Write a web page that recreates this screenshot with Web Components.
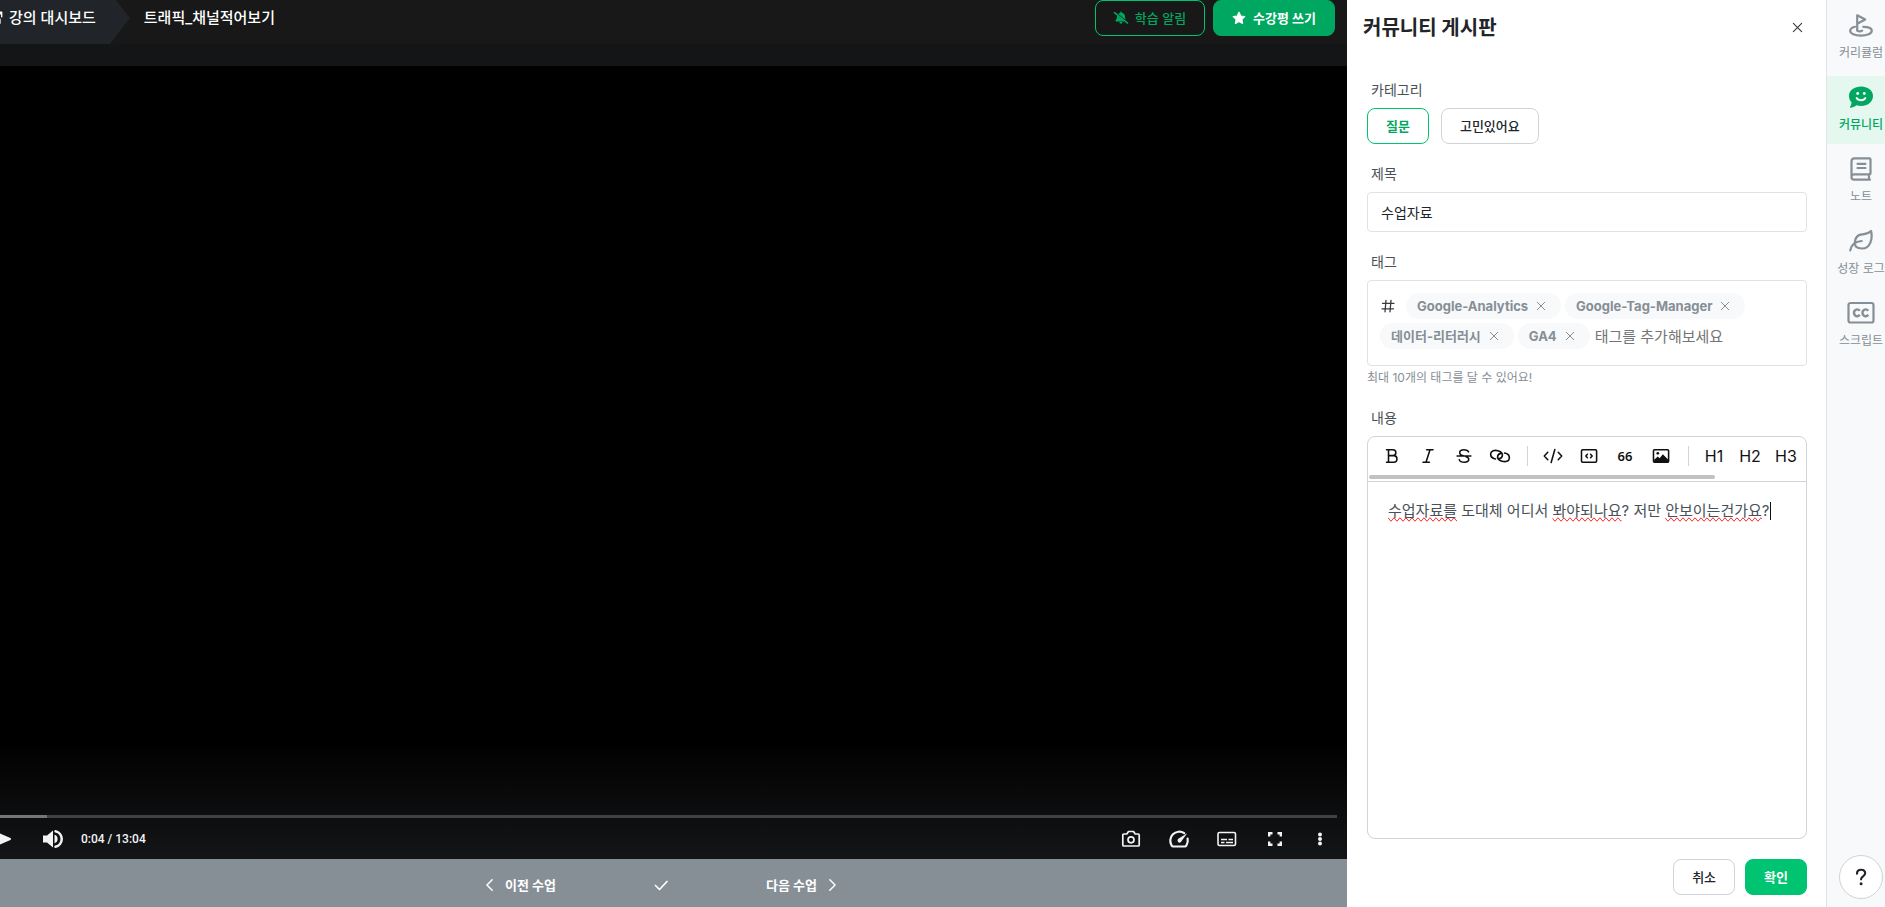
<!DOCTYPE html>
<html lang="ko">
<head>
<meta charset="utf-8">
<meta name="viewport" content="width=device-width, initial-scale=1">
<title>트래픽_채널적어보기</title>
<style>
  body {
    margin: 0;
    overflow: hidden;
    font-family: Inter, "Noto Sans CJK KR", sans-serif;
    color: #212529;
    background: #fff;
  }
</style>
</head>
<body>
<lecture-app></lecture-app>

<script>
const define = (name, html, setup) => {
  const template = document.createElement('template');
  template.innerHTML = html;
  customElements.define(name, class extends HTMLElement {
    constructor() {
      super();
      this.attachShadow({ mode: 'open' }).append(template.content.cloneNode(true));
    }
    connectedCallback() {
      if (setup) setup(this, this.shadowRoot);
    }
  });
};

const stroke = 'fill="none" stroke="currentColor" stroke-linecap="round" stroke-linejoin="round"';
const icons = {
  exit: `<path ${stroke} stroke-width="1.6" d="M6 3H2v11h10.500V9.500M9.500 1.500h5v5M14.500 1.500 8 8"/>`,
  bellOff: `<path fill="currentColor" d="M4.600 3.400C5.600 2.500 6.400 2.200 7.200 2V1.500a.8.8 0 0 1 1.600 0V2c2.200.4 3.800 2.100 3.800 4.200 0 2.200.5 3.300 1.400 4.400L5 3.400zM3.500 5.200l8.500 6.700H2.500c-.8 0-1.200-.9-.6-1.500 1-1.100 1.600-2.200 1.600-5.200zM6.200 12.700h3.600a1.800 1.800 0 0 1-3.600 0z"/><path stroke="currentColor" stroke-width="1.700" stroke-linecap="round" d="m.5 1.800 15 12"/>`,
  star: `<path fill="currentColor" stroke="currentColor" stroke-linejoin="round" stroke-width="1.400" d="m8 1.500 2 4.200 4.600.6-3.300 3.200.8 4.600L8 11.900l-4.100 2.200.8-4.600L1.400 6.300 6 5.700z"/>`,
  close: `<path ${stroke} stroke-width="1.600" d="m2 2 12 12M14 2 2 14"/>`,
  hash: `<path ${stroke} stroke-width="1.300" d="M2.500 5.300h11.500M2 10.800h11.500M6 2.300 5 13.800M11 2.300l-1 11.500"/>`,
  left: `<path ${stroke} stroke-width="1.700" d="M10.500 2 4.500 8l6 6"/>`,
  right: `<path ${stroke} stroke-width="1.700" d="m5.500 2 6 6-6 6"/>`,
  check: `<path ${stroke} stroke-width="1.700" d="m2.500 8.500 4 4 7.500-8"/>`,
  play: `<path fill="currentColor" stroke="currentColor" stroke-width="2" stroke-linejoin="round" d="M6 5v14l16-7z"/>`,
  volume: `<path fill="currentColor" d="M2 8.500h4L12 3.500v17L6 15.500H2zM13.500 7.800a4.400 4.400 0 0 1 0 8.400z"/><path ${stroke} stroke-width="2.500" d="M14.500 4.200a8 8 0 0 1 0 15.600"/>`,
  camera: `<path ${stroke} stroke-width="1.700" d="M4.800 7h3l1.700-2.500h5L16.200 7h3c.6 0 1 .4 1 1v10c0 .6-.4 1-1 1H4.800c-.6 0-1-.4-1-1V8c0-.6.4-1 1-1z"/><circle cx="12" cy="12.800" r="3" ${stroke} stroke-width="1.700"/>`,
  gauge: `<path ${stroke} stroke-width="2.200" d="M17.200 6.200A9 9 0 0 0 4.700 18.600c.3.500.8.900 1.400.9h11.800c.6 0 1.100-.4 1.400-.9a9 9 0 0 0 1.300-7"/><path fill="currentColor" d="m20.200 6.200-8.500 5.200c-2.600 1.800-.1 5.800 2.200 3.600z"/>`,
  subtitle: `<rect x="3" y="5.500" width="17.500" height="13" rx="1.500" ${stroke} stroke-width="1.600"/><path stroke="currentColor" stroke-width="1.600" d="M6 12.500h6M13.500 12.500H18M6 15.500h3.500M11 15.500h7"/>`,
  full: `<path fill="none" stroke="currentColor" stroke-width="2.400" d="M6.200 9.500V6.200h3.300M14.500 6.200h3.300v3.300M17.800 14.500v3.300h-3.300M9.500 17.800H6.200v-3.300"/>`,
  dots: `<g fill="currentColor"><circle cx="12" cy="7.500" r="2"/><circle cx="12" cy="12" r="2"/><circle cx="12" cy="16.500" r="2"/></g>`,
  bold: `<path ${stroke} stroke-width="1.700" d="M6 5.200h7a3.200 3.200 0 0 1 0 6.400H8M13 11.600h.8a3.600 3.600 0 0 1 0 7.200H6M8.200 5.200v13.600"/>`,
  italic: `<path ${stroke} stroke-width="1.700" d="M10.500 5.200h7M6.500 18.800h7M14.200 5.200l-4.400 13.600"/>`,
  strike: `<path ${stroke} stroke-width="1.700" d="M4.500 12h15M17 7.500C16.300 6 14.500 5.200 12 5.200c-3 0-4.700 1.500-4.700 3.200 0 1.500 1 2.600 4.700 3.600M14 12.500c2.300.8 3.200 1.700 3.200 3.100 0 1.900-1.800 3.200-4.900 3.200-2.900 0-4.800-1-5.500-2.800"/>`,
  link: `<path ${stroke} stroke-width="1.800" d="M7 15.200C3.600 14.500 1.600 12.200 1.800 9.600 2.100 6.300 6 5.200 9.800 6.300c3.400 1 5.300 3.300 4.700 5.700-.4 1.700-1.800 2.700-3.600 2.900M17 8.800c3.400.7 5.400 3 5.200 5.600-.3 3.300-4.200 4.400-8 3.300-3.400-1-5.300-3.300-4.700-5.700.4-1.700 1.800-2.700 3.600-2.900"/>`,
  code: `<path ${stroke} stroke-width="1.700" d="M6.300 8 2.500 12l3.800 4M17.700 8l3.800 4-3.800 4M14 5l-4 14"/>`,
  codeBlock: `<rect x="3.800" y="5.200" width="16.500" height="13.600" rx="1.300" ${stroke} stroke-width="1.700"/><path ${stroke} stroke-width="1.600" d="M10.300 10 8.500 12l1.800 2M13.700 10l1.800 2-1.800 2"/>`,
  image: `<rect x="3.800" y="5.200" width="16.500" height="13.600" rx="1" ${stroke} stroke-width="1.700"/><circle cx="8.500" cy="9" r="1.500" fill="currentColor"/><path fill="currentColor" d="m4.500 16 4-3.500 2 2 3.500-4.500 6 6v3h-15.500z"/>`,
  flag: `<path ${stroke} stroke-width="2.200" d="M8.200 17.500V2.300l8 4.200-8 4.200"/><path ${stroke} stroke-width="2.200" d="M6 13.800C3 14.500 1.200 16 1.200 18c0 2.500 4.600 4.600 10.600 4.600 6.200 0 11-1.800 11-4.800 0-2.600-3.800-4-8.500-4"/><path ${stroke} stroke-width="2.200" d="M8.200 17.500c1.300 1 3.700 1 5 .1"/>`,
  chat: `<path fill="currentColor" d="M12.200 1.500C18 1.500 24 5 24 11s-5.500 10-12 10c-1.500 0-3-.3-4.300-.7-2.300 1.700-4.300 2.400-6.200 2.400-.6 0-.8-.7-.4-1.100 1-1.200 1.300-2.300 1.400-4.300C.8 15.500 0 13.400 0 11c0-6 5.800-9.500 12.200-9.500z"/><circle cx="8.700" cy="8.500" r="1.400" fill="#fff"/><circle cx="15.300" cy="8.500" r="1.400" fill="#fff"/><path fill="none" stroke="#fff" stroke-width="1.900" stroke-linecap="round" d="M7.600 13c1.700 3 7.100 3 8.800 0"/>`,
  book: `<path ${stroke} stroke-width="2.200" d="M2.500 19V4.300C2.500 2.500 3.700 1.300 5.300 1.300h15c.7 0 1.200.5 1.200 1.200v13.800c0 .6-.4 1.100-1.100 1.100H5c-1.500 0-2.500 1-2.500 2.500s1 2.700 2.500 2.700h16M20 17.600v4.800M8.500 6.800h8M8.500 11h8"/>`,
  leaf: `<path ${stroke} stroke-width="2.200" d="M1.200 21.500c.8-4.500 4-9 11.500-9.500M6.700 17.500C4.200 10.500 8 5.500 13.500 5.300c3.500-.2 6.300-1 8.600-3.300 1.700 7.500-.7 17.500-9 17.500-3 0-5-.7-6.400-2"/>`,
  cc: `<rect x="1" y="2" width="25" height="19.500" rx="2" ${stroke} stroke-width="2.200"/><path fill="none" stroke="currentColor" stroke-width="2.400" d="M12.300 9.800c-2-2.600-5.800-1.400-5.800 2s3.800 4.600 5.800 2M20.800 9.800c-2-2.600-5.800-1.400-5.800 2s3.800 4.600 5.800 2"/>`,
  help: `<path ${stroke} stroke-width="2.600" d="M7.200 8c0-2.900 2-4.700 4.900-4.700S17 5 17 7.600c0 3.700-4.900 3.600-4.900 7.200"/><circle cx="12.100" cy="20" r="1.800" fill="currentColor"/>`
};
const boxes = { exit: 16, bellOff: 16, star: 16, close: 16, hash: 16, left: 16, right: 16, check: 16 };

define('app-icon', `
  <style>
    :host { display: block; flex: none; width: var(--size, 24px); height: var(--size, 24px); }
    svg { display: block; width: 100%; height: 100%; overflow: visible; }
  </style>
  <svg aria-hidden="true"></svg>`,
  (host, root) => {
    const name = host.getAttribute('name');
    const box = boxes[name] || 24;
    const svg = root.querySelector('svg');
    svg.setAttribute('viewBox', name === 'cc' ? '1.5 0 24 24' : `0 0 ${box} ${box}`);
    svg.innerHTML = icons[name];
  });

define('ui-button', `
  <style>
    :host { display: block; flex: none; }
    button {
      display: flex; align-items: center; justify-content: center; gap: 7px;
      height: 36px; box-sizing: border-box; padding: 0 18px;
      border: 1px solid #ced4da; border-radius: 8px; background: #fff;
      font: 500 13px/20px Inter, "Noto Sans CJK KR", sans-serif; color: #212529;
      white-space: nowrap; cursor: pointer;
    }
    :host([variant="selected"]) button { border-color: #00c471; color: #00a760; font-weight: 700; }
    :host([variant="outline"]) button { border-color: #00c471; background: transparent; color: #00a760; }
    :host([variant="dark-green"]) button { border-color: #00a760; background: #00a760; color: #fff; font-weight: 700; }
    :host([variant="primary"]) button { border-color: #00c471; background: #00c471; color: #fff; font-weight: 700; }
    ::slotted(app-icon) { --size: 14px; }
  </style>
  <button type="button"><slot></slot></button>`);

define('lecture-header', `
  <style>
    :host { display: block; height: 44px; overflow: hidden; background: #181818; color: #fff; }
    header { display: flex; align-items: center; height: 52px; margin-top: -8px; padding-right: 12px; }
    a {
      display: flex; align-items: center; gap: 6px; align-self: stretch;
      margin-left: -11px; padding: 0 34px 0 0;
      background: #212529; color: inherit; text-decoration: none; white-space: nowrap;
      clip-path: polygon(0 0, calc(100% - 20px) 0, 100% 50%, calc(100% - 20px) 100%, 0 100%);
    }
    a, h1 { font-size: 15px; line-height: 22px; font-weight: 500; }
    a app-icon { --size: 14px; }
    h1 { flex: 1; min-width: 0; margin: 0 0 0 14px; font-weight: 500; }
    nav { display: flex; gap: 8px; }
  </style>
  <header>
    <a href="#dashboard"><app-icon name="exit"></app-icon>강의 대시보드</a>
    <h1>트래픽_채널적어보기</h1>
    <nav>
      <ui-button variant="outline"><app-icon name="bellOff"></app-icon>학습 알림</ui-button>
      <ui-button variant="dark-green"><app-icon name="star"></app-icon>수강평 쓰기</ui-button>
    </nav>
  </header>`);

define('lecture-player', `
  <style>
    :host { display: flex; flex-direction: column; flex: 1; min-height: 0; border-top: 22px solid #141517; background: linear-gradient(#000 calc(100% - 120px), #141517); color: #f1f3f5; }
    .stage { flex: 1; }
    progress {
      display: block; width: calc(100% - 10px); height: 3px; border: 0;
      appearance: none; background: #414141;
    }
    progress::-webkit-progress-bar { background: #414141; }
    progress::-webkit-progress-value { background: #767676; }
    .controls { display: flex; align-items: center; height: 41px; padding-right: 15px; }
    button { display: block; padding: 0; border: 0; background: none; color: inherit; cursor: pointer; }
    .play { margin-left: -12px; }
    .volume { margin-left: 29px; }
    time { flex: 1; margin-left: 16px; font: 500 12px/20px Roboto, Inter, sans-serif; }
    .tools { display: flex; gap: 24px; }
    .more { margin-left: -3px; }
  </style>
  <div class="stage"></div>
  <progress max="1000" value="35" aria-label="재생 위치"></progress>
  <div class="controls">
    <button class="play" type="button" aria-label="재생"><app-icon name="play"></app-icon></button>
    <button class="volume" type="button" aria-label="음량"><app-icon name="volume"></app-icon></button>
    <time>0:04 / 13:04</time>
    <div class="tools">
      <button type="button" aria-label="캡처"><app-icon name="camera"></app-icon></button>
      <button type="button" aria-label="재생 속도"><app-icon name="gauge"></app-icon></button>
      <button type="button" aria-label="자막"><app-icon name="subtitle"></app-icon></button>
      <button type="button" aria-label="전체 화면"><app-icon name="full"></app-icon></button>
      <button class="more" type="button" aria-label="더보기"><app-icon name="dots"></app-icon></button>
    </div>
  </div>`);

define('lesson-nav', `
  <style>
    :host { display: flex; align-items: center; justify-content: center; gap: 97px; height: 48px; box-sizing: border-box; padding: 3px 25px 0 0; background: #868e96; color: #fff; }
    button { display: flex; align-items: center; gap: 8px; margin: 0; padding: 0; border: 0; background: none; color: inherit; font: 700 13px/20px Inter, "Noto Sans CJK KR", sans-serif; white-space: nowrap; cursor: pointer; }
    app-icon { --size: 16px; }
    .prev app-icon, .next app-icon { --size: 14px; }
  </style>
  <button class="prev" type="button"><app-icon name="left"></app-icon>이전 수업</button>
  <button type="button" aria-label="수업 완료"><app-icon name="check"></app-icon></button>
  <button class="next" type="button">다음 수업<app-icon name="right"></app-icon></button>`);

define('tag-chip', `
  <style>
    :host { display: flex; align-items: center; gap: 8px; height: 26px; box-sizing: border-box; padding: 0 15px 0 11px; border-radius: 13px; background: #f8f9fa; color: #868e96; font-size: 13px; line-height: 20px; font-weight: 700; white-space: nowrap; }
    button { display: block; padding: 0; border: 0; background: none; color: inherit; cursor: pointer; }
    app-icon { --size: 10px; }
  </style>
  <span><slot></slot></span>
  <button type="button" aria-label="태그 삭제"><app-icon name="close"></app-icon></button>`);

define('tool-button', `
  <style>
    :host { display: block; flex: none; width: 36px; }
    button { display: flex; align-items: center; justify-content: center; width: 100%; height: 36px; padding: 0; border: 0; background: none; color: #111; font: 400 16px/24px Inter, "Noto Sans CJK KR", sans-serif; cursor: pointer; }
    :host([small]) button { font: 600 13px/24px "Noto Sans", sans-serif; }
  </style>
  <button type="button"><slot></slot></button>`,
  (host, root) => {
    const label = host.getAttribute('label');
    if (label) root.querySelector('button').setAttribute('aria-label', label);
  });

define('post-editor', `
  <style>
    :host { display: flex; flex-direction: column; flex: 1; min-height: 0; border: 1px solid #ced4da; border-radius: 8px; overflow: hidden; }
    .toolbar { flex: none; border-bottom: 1px solid #ced4da; }
    .tools { display: flex; align-items: center; height: 38px; padding-left: 6px; overflow: hidden; }
    .tools app-icon { --size: 22px; }
    hr { flex: none; width: 1px; height: 20px; margin: 0 7px 0 9px; border: 0; background: #ced4da; }
    .thumb { width: 79%; height: 4px; margin: 0 1px 2px; border-radius: 2px; background: #c1c1c1; }
    .content { flex: 1; padding: 17px 20px; outline: none; font-size: 15px; line-height: 24px; color: #495057; }
    p { margin: 0; }
    u { text-decoration: spelling-error; }
    .caret { display: inline-block; width: 1px; height: 18px; margin-right: -1px; vertical-align: -4px; background: #111; }
  </style>
  <div class="toolbar">
    <div class="tools">
      <tool-button label="굵게"><app-icon name="bold"></app-icon></tool-button>
      <tool-button label="기울임"><app-icon name="italic"></app-icon></tool-button>
      <tool-button label="취소선"><app-icon name="strike"></app-icon></tool-button>
      <tool-button label="링크"><app-icon name="link"></app-icon></tool-button>
      <hr>
      <tool-button label="코드"><app-icon name="code"></app-icon></tool-button>
      <tool-button label="코드 블록"><app-icon name="codeBlock"></app-icon></tool-button>
      <tool-button small>66</tool-button>
      <tool-button label="이미지"><app-icon name="image"></app-icon></tool-button>
      <hr>
      <tool-button>H1</tool-button>
      <tool-button>H2</tool-button>
      <tool-button>H3</tool-button>
    </div>
    <div class="thumb"></div>
  </div>
  <div class="content" contenteditable="true" role="textbox" aria-multiline="true" aria-label="내용"><p><u>수업자료를</u> 도대체 어디서 <u>봐야되나요</u>? 저만 <u>안보이는건가요</u>?<span class="caret"></span></p></div>`);

define('community-panel', `
  <style>
    :host { display: flex; flex-direction: column; background: #fff; }
    header { display: flex; align-items: center; justify-content: space-between; height: 54px; padding: 1px 17px 0 16px; box-sizing: border-box; }
    h2 { margin: 0; font-size: 20px; line-height: 30px; font-weight: 700; color: #212529; }
    .close { display: grid; place-items: center; width: 24px; height: 24px; padding: 0; border: 0; background: none; color: #343a40; cursor: pointer; }
    .close app-icon { --size: 11px; }
    form { display: flex; flex-direction: column; flex: 1; min-height: 0; gap: 20px; padding: 26px 19px 12px 20px; }
    .field { display: flex; flex-direction: column; gap: 8px; }
    .grow { flex: 1; min-height: 0; }
    .label { padding-left: 4px; font-size: 14px; line-height: 20px; color: #495057; }
    .row { display: flex; gap: 12px; }
    input { font: 14px/20px Inter, "Noto Sans CJK KR", sans-serif; color: #212529; outline: none; box-sizing: border-box; }
    .text { height: 40px; padding: 0 13px; border: 1px solid #dee2e6; border-radius: 4px; }
    .tags { display: flex; flex-wrap: wrap; gap: 4px; padding: 12px 12px 16px; border: 1px solid #dee2e6; border-radius: 4px; }
    .hash { display: flex; align-items: center; width: 22px; color: #343a40; --size: 16px; }
    .tags input { width: 130px; height: 26px; padding: 0 0 0 1px; border: 0; font-size: 15px; background: none; }
    .tags input::placeholder { color: #757575; }
    .hint { margin: -6px 0 0; font-size: 12px; line-height: 20px; color: #868e96; }
    footer { display: flex; justify-content: flex-end; gap: 10px; }
  </style>
  <header>
    <h2>커뮤니티 게시판</h2>
    <button class="close" type="button" aria-label="닫기"><app-icon name="close"></app-icon></button>
  </header>
  <form>
    <div class="field">
      <span class="label">카테고리</span>
      <div class="row">
        <ui-button variant="selected">질문</ui-button>
        <ui-button>고민있어요</ui-button>
      </div>
    </div>
    <div class="field">
      <label class="label" for="title">제목</label>
      <input class="text" id="title" type="text" value="수업자료">
    </div>
    <div class="field">
      <label class="label" for="tag">태그</label>
      <div class="tags">
        <span class="hash"><app-icon name="hash"></app-icon></span>
        <tag-chip>Google-Analytics</tag-chip>
        <tag-chip>Google-Tag-Manager</tag-chip>
        <tag-chip>데이터-리터러시</tag-chip>
        <tag-chip>GA4</tag-chip>
        <input id="tag" type="text" placeholder="태그를 추가해보세요!">
      </div>
      <p class="hint">최대 10개의 태그를 달 수 있어요!</p>
    </div>
    <div class="field grow">
      <span class="label">내용</span>
      <post-editor></post-editor>
    </div>
    <footer>
      <ui-button>취소</ui-button>
      <ui-button variant="primary">확인</ui-button>
    </footer>
  </form>`);

define('rail-item', `
  <style>
    :host { display: block; }
    a { display: flex; flex-direction: column; align-items: center; gap: 6px; height: 68px; box-sizing: border-box; padding-top: 9px; color: #868e96; font-size: 12px; line-height: 20px; text-decoration: none; white-space: nowrap; }
    :host([active]) a { background: #e5f8ef; color: #00a760; font-weight: 500; }
    ::slotted(app-icon) { --size: 24px; }
  </style>
  <a href="#menu"><slot name="icon"></slot><span><slot></slot></span></a>`);

define('side-rail', `
  <style>
    :host { display: block; overflow: hidden; border-left: 1px solid #e1e4e8; background: #f8f9fa; }
    nav { display: flex; flex-direction: column; gap: 4px; width: 68px; height: 100%; box-sizing: border-box; padding: 4px 0 8px; }
    .help { display: grid; place-items: center; width: 44px; height: 44px; margin: auto auto 0 12px; padding: 0; border: 1px solid #ced4da; border-radius: 50%; background: #fff; color: #212529; --size: 20px; cursor: pointer; }
  </style>
  <nav>
    <rail-item><app-icon slot="icon" name="flag"></app-icon>커리큘럼</rail-item>
    <rail-item active><app-icon slot="icon" name="chat"></app-icon>커뮤니티</rail-item>
    <rail-item><app-icon slot="icon" name="book"></app-icon>노트</rail-item>
    <rail-item><app-icon slot="icon" name="leaf"></app-icon>성장 로그</rail-item>
    <rail-item><app-icon slot="icon" name="cc"></app-icon>스크립트</rail-item>
    <button class="help" type="button" aria-label="도움말"><app-icon name="help"></app-icon></button>
  </nav>`);

define('lecture-app', `
  <style>
    :host { display: grid; grid-template-columns: minmax(0, 1fr) 479px 59px; height: 100vh; }
    main { display: flex; flex-direction: column; min-width: 0; min-height: 0; }
    community-panel, side-rail { min-height: 0; }
  </style>
  <main>
    <lecture-header></lecture-header>
    <lecture-player></lecture-player>
    <lesson-nav></lesson-nav>
  </main>
  <community-panel></community-panel>
  <side-rail></side-rail>`);
</script>
</body>
</html>
